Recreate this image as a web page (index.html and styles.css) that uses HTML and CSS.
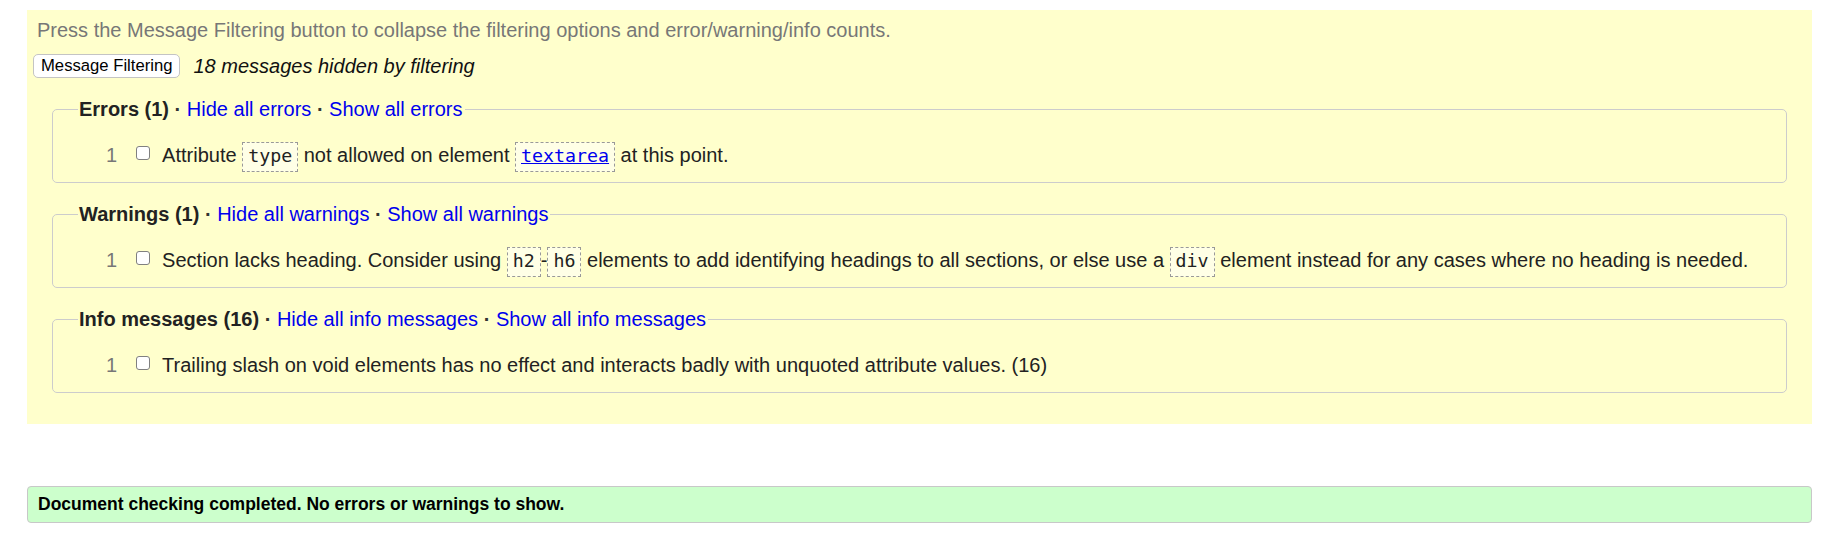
FILE: index.html
```html
<!DOCTYPE html>
<html lang="en">
<head>
<meta charset="utf-8">
<title>Message Filtering</title>
<link rel="stylesheet" href="styles.css">
</head>
<body>
<div class="page">
  <div class="filters">
    <p class="hint">Press the Message Filtering button to collapse the filtering options and error/warning/info counts.</p>
    <div class="toolbar">
      <button class="btn" type="button">Message Filtering</button>
      <span class="hidden-count">18 messages hidden by filtering</span>
    </div>

    <fieldset class="group">
      <legend class="group-title"><b>Errors (1)</b> <b class="sep">·</b> <a href="#" class="link">Hide all errors</a> <b class="sep">·</b> <a href="#" class="link">Show all errors</a></legend>
      <div class="msg"><span class="num">1</span><input class="chk" type="checkbox"><span class="text">Attribute <code class="code">type</code> not allowed on element <code class="code"><a href="#" class="code-link">textarea</a></code> at this point.</span></div>
    </fieldset>

    <fieldset class="group">
      <legend class="group-title"><b>Warnings (1)</b> <b class="sep">·</b> <a href="#" class="link">Hide all warnings</a> <b class="sep">·</b> <a href="#" class="link">Show all warnings</a></legend>
      <div class="msg"><span class="num">1</span><input class="chk" type="checkbox"><span class="text">Section lacks heading. Consider using <code class="code">h2</code>-<code class="code">h6</code> elements to add identifying headings to all sections, or else use a <code class="code">div</code> element instead for any cases where no heading is needed.</span></div>
    </fieldset>

    <fieldset class="group">
      <legend class="group-title"><b>Info messages (16)</b> <b class="sep">·</b> <a href="#" class="link">Hide all info messages</a> <b class="sep">·</b> <a href="#" class="link">Show all info messages</a></legend>
      <div class="msg"><span class="num">1</span><input class="chk" type="checkbox"><span class="text">Trailing slash on void elements has no effect and interacts badly with unquoted attribute values. (16)</span></div>
    </fieldset>
  </div>

  <p class="success">Document checking completed. No errors or warnings to show.</p>
</div>
</body>
</html>
```

FILE: styles.css
```css
html, body {
  margin: 0;
  padding: 0;
  background: #ffffff;
}

body {
  font-family: "Liberation Sans", Arial, sans-serif;
  font-size: 20px;
  color: #222222;
}

.page {
  padding: 10px 15px 14px 27px;
}

.filters {
  background: #ffffcc;
  padding: 9px 5px 10.5px;
}

.hint {
  margin: 0 0 0 5px;
  line-height: 23px;
  color: #777777;
}

.toolbar {
  display: flex;
  align-items: center;
  height: 24px;
  margin-top: 12px;
  margin-left: 1px;
}

.btn {
  font-family: "Liberation Sans", Arial, sans-serif;
  font-size: 16.67px;
  line-height: 20px;
  height: 24px;
  padding: 1px 7px;
  margin: 0 13px 0 0;
  border: 1px solid #c4c4c4;
  border-radius: 5px;
  background: #ffffff;
  color: #000000;
}

.hidden-count {
  font-style: italic;
  color: #111111;
  line-height: 23px;
}

.group {
  margin: 20px 20px 20px 20px;
  padding: 23px 0 15px 0;
  border: 1px solid #cccccc;
  border-radius: 5px;
  min-width: 0;
}

.group + .group {
  margin-top: 0;
}

.group-title {
  margin-left: 25px;
  padding: 0 2px 0 1px;
  line-height: 23px;
  color: #222222;
}

.sep {
  color: #333333;
}

.link {
  color: #0000ee;
  text-decoration: none;
}

.msg {
  padding-left: 53px;
  line-height: 23px;
  white-space: nowrap;
}

.num {
  display: inline-block;
  width: 11.12px;
  margin-right: 19px;
  color: #777777;
}

.chk {
  appearance: none;
  -webkit-appearance: none;
  width: 14px;
  height: 14px;
  margin: 0 12px 2px 0;
  border: 1px solid #808080;
  border-radius: 3px;
  background: #ffffff;
  vertical-align: baseline;
}

.code {
  font-family: "DejaVu Sans Mono", "Liberation Mono", monospace;
  font-size: 18.3px;
  padding: 2px 5px 5px;
  border: 1px dashed #999999;
  background: #ffffe6;
  color: #222222;
}

.code-link {
  color: #0000ee;
  text-decoration: underline;
}

.success {
  margin: 62px 0 0 0;
  padding: 7px 10px 8px;
  border: 1px solid #c8c8c8;
  border-radius: 4px;
  background: #ccffcc;
  font-size: 17.5px;
  font-weight: bold;
  line-height: 20px;
  color: #000000;
}
```
